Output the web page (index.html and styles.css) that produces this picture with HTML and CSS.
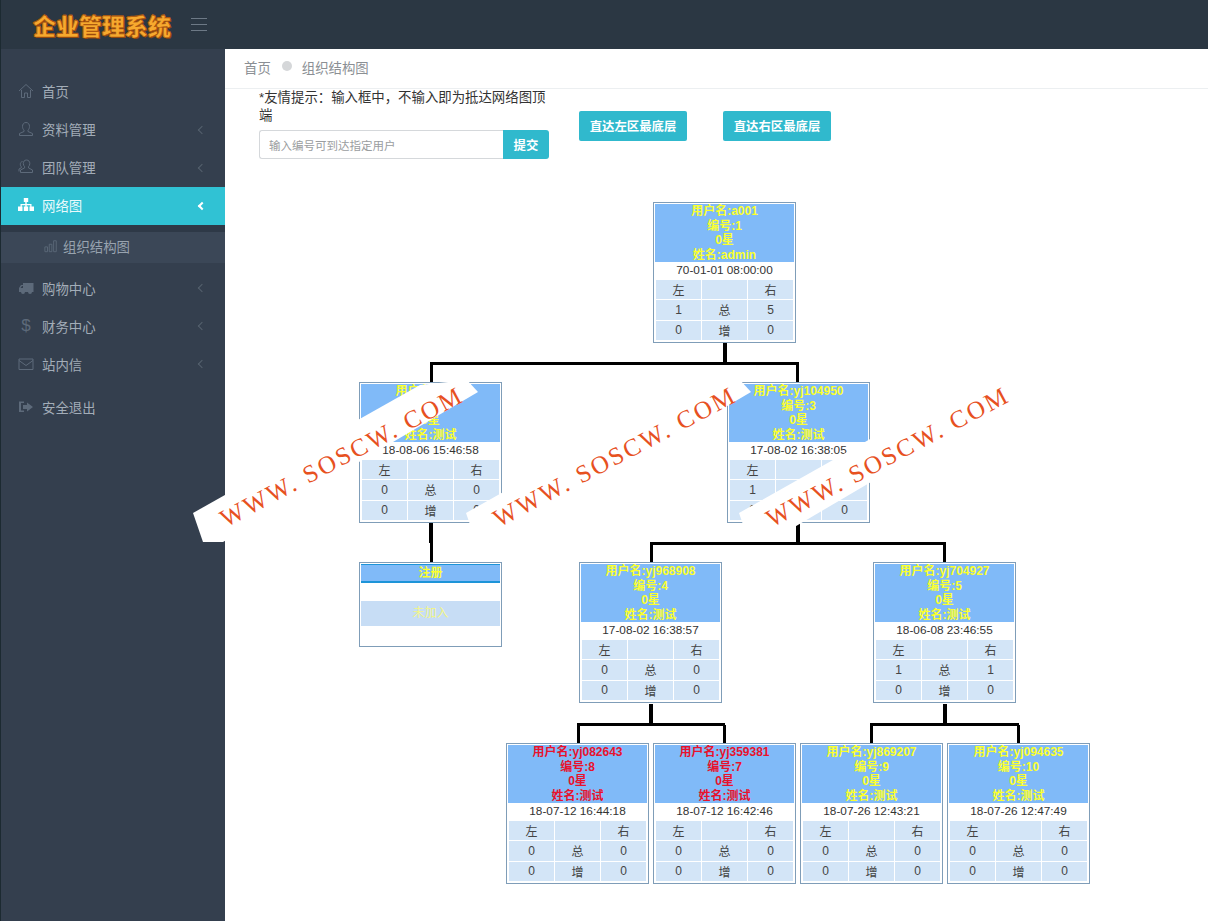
FILE: index.html
```html
<!DOCTYPE html>
<html lang="zh-CN">
<head>
  <meta charset="UTF-8">
  <title>组织结构图</title>
  <link rel="stylesheet" href="styles.css">
</head>
<body>
  <header class="topbar">
    <div class="logo">企业管理系统</div>
    <div class="burger"><span></span><span></span><span></span></div>
  </header>
  <div class="layout">
    <aside class="sidebar">
      <ul class="menu">
        <li class="item">
          <svg class="icon" viewBox="0 0 16 16"><path d="M1 8 8 1.500 15 8M3.500 7v7.500H6.500V10h3v4.500H12.500V7"/></svg>
          <span>首页</span>
        </li>
        <li class="item">
          <svg class="icon" viewBox="0 0 16 16"><path d="M8 1.500c-2.500 0-3.500 2-3.500 4 0 1.500.7 3 1.500 3.700v1.300L1.500 12.500v2h13v-2L10 10.500V9.200c.8-.7 1.500-2.200 1.500-3.700 0-2-1-4-3.500-4z"/></svg>
          <span>资料管理</span><i class="arrow"></i>
        </li>
        <li class="item">
          <svg class="icon" viewBox="0 0 16 16"><path d="M8.500 1c-2.200 0-3.200 1.800-3.200 3.500 0 1.300.6 2.600 1.300 3.200v1.200L2.500 11v2.500h12V11l-4-2.100V7.700c.7-.6 1.300-1.900 1.300-3.200C11.800 2.800 10.700 1 8.500 1zM4.500 2.500C3 2.800 2.300 4 2.300 5.300c0 1 .4 2 1 2.500v1L1 10v2.500"/></svg>
          <span>团队管理</span><i class="arrow"></i>
        </li>
        <li class="item active">
          <svg class="icon solid" viewBox="0 0 16 16"><path d="M5.800 1h4.400v4H8.700v2h4.800v2.500H16V14h-4.500V9.500h.700V8.300H8.700v1.200h1.500V14H5.800V9.500h1.500V8.300H3.800v1.200h.700V14H0V9.500h2.500V7h4.800V5H5.800z"/></svg>
          <span>网络图</span><i class="arrow"></i>
        </li>
        <li class="sub">
          <div class="sub-item">
            <svg class="icon small" viewBox="0 0 16 16"><path d="M1 9h3v5.500H1zM6 6h3v8.500H6zM11 2h3v12.500h-3z"/></svg>
            <span>组织结构图</span>
          </div>
        </li>
        <li class="item">
          <svg class="icon solid" viewBox="0 0 16 16"><path d="M5 3h10.500v9H14a2 2 0 0 1-4 0H7a2 2 0 0 1-4 0H1V8l2-3h2zM4 6 2.500 8H5V6z"/></svg>
          <span>购物中心</span><i class="arrow"></i>
        </li>
        <li class="item">
          <span class="dollar">$</span>
          <span>财务中心</span><i class="arrow"></i>
        </li>
        <li class="item">
          <svg class="icon" viewBox="0 0 16 16"><path d="M1 3h14v10.500H1zM1 4.500 8 9.500l7-5"/></svg>
          <span>站内信</span><i class="arrow"></i>
        </li>
        <li class="item logout">
          <svg class="icon solid" viewBox="0 0 16 16"><path d="M6 4V2.500h-5V13h5v-1.500H3V4zM9 3.500 15 8l-6 4.500V10H5V6h4z"/></svg>
          <span>安全退出</span>
        </li>
      </ul>
    </aside>

    <main class="main">
      <div class="crumbs">
        <span>首页</span>
        <i class="dot"></i>
        <span>组织结构图</span>
      </div>

      <div class="tools">
        <form class="search">
          <p>*友情提示：输入框中，不输入即为抵达网络图顶端</p>
          <div class="search-row">
            <input type="text" placeholder="输入编号可到达指定用户">
            <button type="button" class="btn attached">提交</button>
          </div>
        </form>
        <button type="button" class="btn jump">直达左区最底层</button>
        <button type="button" class="btn jump">直达右区最底层</button>
      </div>

      <div class="tree">
        <!-- connectors -->
        <i class="ln trunk t1"></i><i class="ln bar b1"></i><i class="ln drop d1a"></i><i class="ln drop d1b"></i>
        <i class="ln trunk t2"></i><i class="ln drop d2"></i>
        <i class="ln trunk t3"></i><i class="ln bar b3"></i><i class="ln drop d3a"></i><i class="ln drop d3b"></i>
        <i class="ln trunk t4"></i><i class="ln bar b4"></i><i class="ln drop d4a"></i><i class="ln drop d4b"></i>
        <i class="ln trunk t5"></i><i class="ln bar b5"></i><i class="ln drop d5a"></i><i class="ln drop d5b"></i>

        <div class="node n1">
          <div class="head">用户名:a001<br>编号:1<br>0星<br>姓名:admin</div>
          <div class="date">70-01-01 08:00:00</div>
          <table><tr><td>左</td><td></td><td>右</td></tr><tr><td>1</td><td>总</td><td>5</td></tr><tr><td>0</td><td>增</td><td>0</td></tr></table>
        </div>
        <div class="node n2">
          <div class="head">用户名:yj300<br>编号:2<br>0星<br>姓名:测试</div>
          <div class="date">18-08-06 15:46:58</div>
          <table><tr><td>左</td><td></td><td>右</td></tr><tr><td>0</td><td>总</td><td>0</td></tr><tr><td>0</td><td>增</td><td>0</td></tr></table>
        </div>
        <div class="node n3">
          <div class="head">用户名:yj104950<br>编号:3<br>0星<br>姓名:测试</div>
          <div class="date">17-08-02 16:38:05</div>
          <table><tr><td>左</td><td></td><td>右</td></tr><tr><td>1</td><td>总</td><td>1</td></tr><tr><td>0</td><td>增</td><td>0</td></tr></table>
        </div>
        <div class="node empty n-reg">
          <div class="reg">注册</div>
          <div class="blank"></div>
          <div class="wait">未加入</div>
        </div>
        <div class="node n4">
          <div class="head">用户名:yj968908<br>编号:4<br>0星<br>姓名:测试</div>
          <div class="date">17-08-02 16:38:57</div>
          <table><tr><td>左</td><td></td><td>右</td></tr><tr><td>0</td><td>总</td><td>0</td></tr><tr><td>0</td><td>增</td><td>0</td></tr></table>
        </div>
        <div class="node n5">
          <div class="head">用户名:yj704927<br>编号:5<br>0星<br>姓名:测试</div>
          <div class="date">18-06-08 23:46:55</div>
          <table><tr><td>左</td><td></td><td>右</td></tr><tr><td>1</td><td>总</td><td>1</td></tr><tr><td>0</td><td>增</td><td>0</td></tr></table>
        </div>
        <div class="node red n8">
          <div class="head">用户名:yj082643<br>编号:8<br>0星<br>姓名:测试</div>
          <div class="date">18-07-12 16:44:18</div>
          <table><tr><td>左</td><td></td><td>右</td></tr><tr><td>0</td><td>总</td><td>0</td></tr><tr><td>0</td><td>增</td><td>0</td></tr></table>
        </div>
        <div class="node red n7">
          <div class="head">用户名:yj359381<br>编号:7<br>0星<br>姓名:测试</div>
          <div class="date">18-07-12 16:42:46</div>
          <table><tr><td>左</td><td></td><td>右</td></tr><tr><td>0</td><td>总</td><td>0</td></tr><tr><td>0</td><td>增</td><td>0</td></tr></table>
        </div>
        <div class="node n9">
          <div class="head">用户名:yj869207<br>编号:9<br>0星<br>姓名:测试</div>
          <div class="date">18-07-26 12:43:21</div>
          <table><tr><td>左</td><td></td><td>右</td></tr><tr><td>0</td><td>总</td><td>0</td></tr><tr><td>0</td><td>增</td><td>0</td></tr></table>
        </div>
        <div class="node n10">
          <div class="head">用户名:yj094635<br>编号:10<br>0星<br>姓名:测试</div>
          <div class="date">18-07-26 12:47:49</div>
          <table><tr><td>左</td><td></td><td>右</td></tr><tr><td>0</td><td>总</td><td>0</td></tr><tr><td>0</td><td>增</td><td>0</td></tr></table>
        </div>

        <div class="mark m1"><span>WWW. SOSCW. COM</span></div>
        <div class="mark m2"><span>WWW. SOSCW. COM</span></div>
        <div class="mark m3"><span>WWW. SOSCW. COM</span></div>
      </div>
    </main>
  </div>
</body>
</html>
```

FILE: styles.css
```css
* {
  box-sizing: border-box;
}
html, body {
  height: 100%;
}
body {
  margin: 0;
  background: #fff;
  color: #333;
  font-family: "Liberation Sans", "Noto Sans CJK SC", sans-serif;
  font-size: 13.400px;
  overflow: hidden;
}

/* top bar */
.topbar {
  height: 49px;
  background: #2b3743;
  border-left: 1px solid #1c2a31;
  display: flex;
  align-items: center;
}
.logo {
  margin-left: 32px;
  width: 140px;
  font-family: "Noto Sans CJK SC", sans-serif;
  font-size: 23px;
  line-height: 26px;
  font-weight: 900;
  white-space: nowrap;
  color: #f7a92e;
  -webkit-text-stroke: 0.5px #a84f0c;
  text-shadow: 1px 1px 0 #8a4510, -1px 0 0 #a85a14, 0 -1px 0 #a85a14;
}
.burger {
  margin-left: 18px;
  width: 16px;
  display: flex;
  flex-direction: column;
  gap: 5px;
}
.burger span {
  height: 1px;
  background: #6d7986;
}

/* sidebar */
.layout {
  display: flex;
  height: 872px;
}
.sidebar {
  width: 225px;
  flex: none;
  background: #343f4e;
  border-left: 1px solid #1c2a31;
  padding-top: 24px;
}
.menu {
  list-style: none;
  margin: 0;
  padding: 0;
}
.item {
  height: 38px;
  padding: 0 18px 2px 17px;
  display: flex;
  align-items: center;
  color: #a3adb8;
  position: relative;
}
.sub ~ .item {
  padding-bottom: 1px;
}
.item.active {
  background: #30c2d4;
  color: #eafafc;
}
.item.logout {
  margin-top: 5px;
}
.icon {
  width: 16px;
  height: 16px;
  margin-right: 8px;
  flex: none;
  fill: none;
  stroke: #5d6a7a;
  stroke-width: 1;
}
.icon.solid {
  fill: #5d6a7a;
  stroke: none;
}
.active .icon.solid {
  fill: #fff;
}
.icon.small {
  width: 14px;
  height: 14px;
  margin-right: 5px;
}
.dollar {
  width: 16px;
  margin-right: 8px;
  text-align: center;
  font-size: 17px;
  color: #5d6a7a;
}
.arrow {
  position: absolute;
  right: 20px;
  top: 16px;
  width: 6px;
  height: 6px;
  border-left: 1px solid #56626f;
  border-bottom: 1px solid #56626f;
  transform: rotate(45deg);
}
.active .arrow {
  border-color: #fff;
  border-width: 2px;
}
.sub {
  height: 44px;
  border-top: 7px solid #2e3947;
  padding-bottom: 6px;
}
.sub-item {
  height: 31px;
  padding: 0 0 3px 43px;
  background: #3b4757;
  color: #98a3af;
  display: flex;
  align-items: center;
}

/* main area */
.main {
  flex: 1;
  min-width: 0;
}
.crumbs {
  height: 40px;
  padding: 0 0 4px 19px;
  border-bottom: 1px solid #eceff1;
  display: flex;
  align-items: center;
  color: #8b8f94;
}
.dot {
  width: 10px;
  height: 10px;
  margin: 0 10px 2px 11px;
  border-radius: 50%;
  background: #d5d7d9;
}
.tools {
  height: 81px;
  padding-left: 34px;
  display: flex;
  align-items: flex-start;
}
.search {
  width: 290px;
}
.search p {
  margin: 0 0 5px;
  line-height: 18px;
  color: #333;
}
.search-row {
  display: flex;
  height: 29px;
}
.search-row input {
  width: 244px;
  height: 29px;
  padding: 0 9px;
  border: 1px solid #d5d8db;
  border-right: 0;
  border-radius: 3px 0 0 3px;
  font: 11.500px "Noto Sans CJK SC", sans-serif;
  outline: none;
}
.search-row input::placeholder {
  color: #9a9da0;
}
.btn {
  border: 0;
  border-radius: 2px;
  background: #30b9cd;
  color: #fff;
  font-family: "Noto Sans CJK SC", sans-serif;
  font-size: 12.400px;
  font-weight: 700;
  padding: 0;
}
.btn.attached {
  width: 46px;
  border-radius: 0 3px 3px 0;
}
.btn.jump {
  width: 108px;
  height: 30px;
  margin-top: 22px;
  margin-left: 30px;
}
.btn.jump + .btn.jump {
  margin-left: 36px;
}

/* org chart: coordinates are relative to the tree box */
.tree {
  position: relative;
  height: 730px;
}
.node {
  position: absolute;
  width: 143px;
  height: 141px;
  padding: 1px;
  background: #fff;
  border: 1px solid #7f9db8;
  font-size: 12px;
  text-align: center;
}
.head {
  height: 58px;
  background: #80baf8;
  color: #fbff2e;
  font-weight: 700;
  line-height: 14.500px;
  overflow: hidden;
  white-space: nowrap;
}
.red .head {
  color: #e8122c;
}
.date {
  height: 17px;
  line-height: 17px;
  font-size: 11.800px;
  color: #333;
}
.node table {
  width: 100%;
  height: 62px;
  table-layout: fixed;
  border-collapse: collapse;
  color: #444;
}
.node td {
  padding: 0;
  background: #d3e5f7;
  border: 1px solid #fff;
}
.node.empty {
  height: 85px;
}
.reg {
  height: 19px;
  line-height: 17px;
  background: #80baf8;
  border-top: 1px solid #1d94d8;
  border-bottom: 2px solid #1d94d8;
  color: #fbff2e;
  font-weight: 700;
}
.blank {
  height: 18px;
}
.wait {
  height: 25px;
  line-height: 25px;
  background: #c7ddf5;
  color: #f2f58a;
}

.n1 { left: 428px; top: 32px; }
.n2 { left: 134px; top: 212px; }
.n3 { left: 502px; top: 212px; }
.n-reg { left: 134px; top: 392px; }
.n4 { left: 354px; top: 392px; }
.n5 { left: 648px; top: 392px; }
.n8 { left: 281px; top: 573px; }
.n7 { left: 428px; top: 573px; }
.n9 { left: 575px; top: 573px; }
.n10 { left: 722px; top: 573px; }

.ln {
  position: absolute;
  background: #000;
}
.trunk {
  width: 4px;
  height: 20px;
}
.bar {
  height: 3px;
}
.drop {
  width: 3px;
  height: 18px;
}
.t1 { left: 498px; top: 173px; }
.b1 { left: 205px; top: 192px; width: 369px; }
.d1a { left: 205px; top: 194px; }
.d1b { left: 571px; top: 194px; }
.t2 { left: 204px; top: 353px; height: 20px; }
.d2 { left: 205px; top: 372px; height: 20px; }
.t3 { left: 571px; top: 353px; }
.b3 { left: 425px; top: 372px; width: 296px; }
.d3a { left: 425px; top: 374px; }
.d3b { left: 718px; top: 374px; }
.t4 { left: 424px; top: 534px; }
.b4 { left: 352px; top: 553px; width: 148px; }
.d4a { left: 352px; top: 555px; }
.d4b { left: 498px; top: 555px; }
.t5 { left: 718px; top: 534px; }
.b5 { left: 645px; top: 553px; width: 149px; }
.d5a { left: 645px; top: 555px; }
.d5b { left: 792px; top: 555px; }

/* watermark bands */
.mark {
  position: absolute;
  top: 208px;
  width: 290px;
  height: 165px;
  display: flex;
  align-items: center;
  justify-content: center;
}
.mark::before {
  content: "";
  position: absolute;
  inset: 0;
  background: #fff;
  clip-path: polygon(1px 135px, 228px 7px, 275px 2px, 286px 14px, 31px 164px, 11px 164px);
}
.mark span {
  position: relative;
  color: #e7511f;
  font-family: "Liberation Serif", serif;
  font-size: 25px;
  letter-spacing: 2.500px;
  white-space: nowrap;
  transform: translate(5px, -4px) rotate(-28deg);
}
.m1 { left: -33px; }
.m2 { left: 240px; }
.m3 { left: 513px; }
```
